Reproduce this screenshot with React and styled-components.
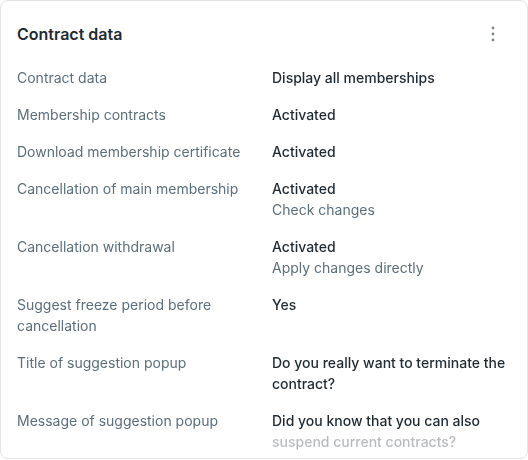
import React from "react";
import styled, { createGlobalStyle } from "styled-components";

const Global = createGlobalStyle`
  html, body { margin: 0; padding: 0; background: #ffffff; }
  body { font-family: Inter, "Noto Sans", sans-serif; -webkit-font-smoothing: antialiased; }
`;

const Card = styled.section`
  box-sizing: border-box;
  width: 528px;
  height: 459px;
  border: 1px solid #e2e4e7;
  border-radius: 8px;
  background: #fff;
  overflow: hidden;
  padding: 21px 16px 0 16px;
  display: flex;
  flex-direction: column;
`;

const Header = styled.header`
  display: flex;
  align-items: center;
  justify-content: space-between;
  height: 24px;
  margin-bottom: 21px;
`;

const Title = styled.h2`
  margin: 0;
  font-size: 16px;
  line-height: 24px;
  font-weight: 600;
  color: #1f2a33;
`;

const MenuButton = styled.button`
  border: 0;
  background: transparent;
  padding: 0;
  width: 24px;
  height: 24px;
  margin-right: 6px;
  display: flex;
  align-items: center;
  justify-content: center;
  color: #7d878f;
  cursor: pointer;
`;

const Rows = styled.dl`
  margin: 0;
  display: grid;
  grid-template-columns: 1fr 1fr;
  column-gap: 16px;
  row-gap: 16px;
  -webkit-mask-image: linear-gradient(to bottom, #000 calc(100% - 22px), rgba(0,0,0,0.32) calc(100% - 18px));
  mask-image: linear-gradient(to bottom, #000 calc(100% - 22px), rgba(0,0,0,0.32) calc(100% - 18px));
`;

const Label = styled.dt`
  margin: 0;
  font-size: 14px;
  line-height: 21px;
  color: #5b6f7c;
`;

const Value = styled.dd`
  margin: 0;
  display: flex;
  flex-direction: column;
  font-size: 14px;
  line-height: 21px;
`;

const Main = styled.span`
  color: #1f2a33;
  font-weight: 500;
`;

const Sub = styled.span`
  color: #5b6f7c;
  font-weight: 400;
`;

const rows = [
  { label: "Contract data", value: "Display all memberships" },
  { label: "Membership contracts", value: "Activated" },
  { label: "Download membership certificate", value: "Activated" },
  { label: "Cancellation of main membership", value: "Activated", sub: "Check changes" },
  { label: "Cancellation withdrawal", value: "Activated", sub: "Apply changes directly" },
  { label: "Suggest freeze period before cancellation", value: "Yes" },
  { label: "Title of suggestion popup", value: "Do you really want to terminate the contract?" },
  { label: "Message of suggestion popup", value: "Did you know that you can also suspend current contracts?" },
];

const Kebab = () => (
  <svg width="4" height="16" viewBox="0 0 4 16" fill="currentColor">
    <circle cx="2" cy="2" r="1.4" />
    <circle cx="2" cy="8" r="1.4" />
    <circle cx="2" cy="14" r="1.4" />
  </svg>
);

export default function App() {
  return (
    <>
      <Global />
      <Card>
        <Header>
          <Title>Contract data</Title>
          <MenuButton aria-label="More">
            <Kebab />
          </MenuButton>
        </Header>
        <Rows>
          {rows.map((r) => (
            <React.Fragment key={r.label}>
              <Label>{r.label}</Label>
              <Value>
                <Main>{r.value}</Main>
                {r.sub && <Sub>{r.sub}</Sub>}
              </Value>
            </React.Fragment>
          ))}
        </Rows>
      </Card>
    </>
  );
}
